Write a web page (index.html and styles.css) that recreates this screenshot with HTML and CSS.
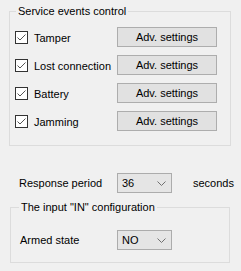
FILE: index.html
```html
<!DOCTYPE html>
<html lang="en">
<head>
  <meta charset="UTF-8" />
  <title>Service events</title>
  <link rel="stylesheet" href="styles.css">
</head>
<body>

  <div class="panel">
    <!-- Service events -->
    <fieldset class="group events">
      <legend>Service events control</legend>

      <div class="event-row">
        <label class="check"><span class="box"><svg viewBox="0 0 11 11"><polyline points="1.5,5.5 4,8 9.5,2.5"/></svg></span>Tamper</label>
        <button class="btn">Adv. settings</button>
      </div>
      <div class="event-row">
        <label class="check"><span class="box"><svg viewBox="0 0 11 11"><polyline points="1.5,5.5 4,8 9.5,2.5"/></svg></span>Lost connection</label>
        <button class="btn">Adv. settings</button>
      </div>
      <div class="event-row">
        <label class="check"><span class="box"><svg viewBox="0 0 11 11"><polyline points="1.5,5.5 4,8 9.5,2.5"/></svg></span>Battery</label>
        <button class="btn">Adv. settings</button>
      </div>
      <div class="event-row">
        <label class="check"><span class="box"><svg viewBox="0 0 11 11"><polyline points="1.5,5.5 4,8 9.5,2.5"/></svg></span>Jamming</label>
        <button class="btn">Adv. settings</button>
      </div>
    </fieldset>

    <!-- Response period -->
    <div class="period-row">
      <span>Response period</span>
      <div class="combo">
        <span>36</span>
        <svg viewBox="0 0 9 5"><polyline points="0.5,0.5 4.5,4.5 8.5,0.5"/></svg>
      </div>
      <span class="unit">seconds</span>
    </div>

    <!-- Input config -->
    <fieldset class="group config">
      <legend>The input "IN" configuration</legend>
      <div class="config-row">
        <span>Armed state</span>
        <div class="combo">
          <span>NO</span>
          <svg viewBox="0 0 9 5"><polyline points="0.5,0.5 4.5,4.5 8.5,0.5"/></svg>
        </div>
      </div>
    </fieldset>
  </div>

</body>
</html>
```

FILE: styles.css
```css
/* Reset & base */
* { box-sizing: border-box; }
body {
  margin: 0;
  background: #f0f0f0;
  color: #000;
  font-family: "Liberation Sans", Arial, sans-serif;
  font-size: 11px;
  line-height: 14px;
}
.panel {
  display: flex;
  flex-direction: column;
  padding-top: 4px;
}

/* Group boxes */
.group {
  margin: 0;
  border: 1px solid #dcdcdc;
  min-width: 0;
}
.group legend {
  padding: 0 2px;
  line-height: 14px;
}
.events {
  margin-left: 9px;
  width: 222px;
  padding: 9px 0 14px 5px;
  display: flex;
  flex-direction: column;
  gap: 8px;
}
.events legend { margin-left: 1px; }
.config {
  margin: 7px 0 0 10px;
  width: 220px;
  padding: 16px 0 12px 9px;
}
.config legend { margin-left: -1px; }

/* Event rows */
.event-row {
  display: grid;
  grid-template-columns: 102px 100px;
  align-items: center;
  height: 20px;
}
.check {
  display: flex;
  align-items: center;
  gap: 6px;
  padding-top: 1px;
}
.box {
  width: 13px;
  height: 13px;
  border: 1px solid #333;
  background: #fff;
  display: flex;
}
.box svg {
  width: 11px;
  height: 11px;
  fill: none;
  stroke: #555;
  stroke-width: 1;
}
.btn {
  height: 20px;
  width: 100px;
  padding: 0;
  border: 1px solid #adadad;
  background: #e1e1e1;
  font-family: inherit;
  font-size: 11px;
  font-weight: normal;
  color: #000;
}

/* Combos */
.period-row,
.config-row {
  display: flex;
  align-items: center;
  height: 20px;
}
.period-row {
  margin-top: 27px;
  padding-left: 19px;
}
.period-row > span:first-child { width: 98px; }
.config-row > span:first-child { width: 97px; }
.combo {
  width: 55px;
  height: 20px;
  border: 1px solid #acacac;
  background: #e5e5e5;
  display: flex;
  align-items: center;
  justify-content: space-between;
  padding: 0 5px 0 4px;
}
.combo svg {
  width: 9px;
  height: 5px;
  fill: none;
  stroke: #707070;
  stroke-width: 1;
}
.unit { margin-left: 21px; }
```
